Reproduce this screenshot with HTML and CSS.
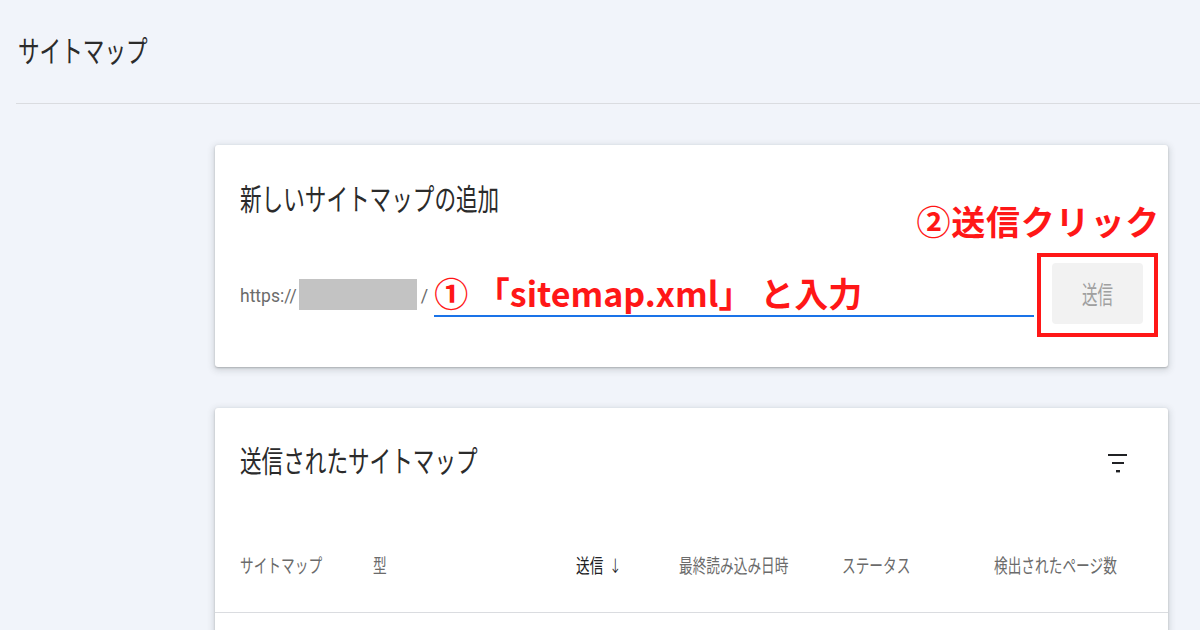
FILE: index.html
```html
<!DOCTYPE html>
<html lang="ja">
<head>
    <meta charset="UTF-8">
    <meta name="viewport" content="width=device-width, initial-scale=1.0">
    <title>サイトマップ</title>
    <link rel="stylesheet" href="styles.css">
</head>
<body>
    <header class="topbar">
        <h1 class="page-title"><span class="sq">サイトマップ</span></h1>
    </header>

    <main class="content">
        <section class="card add-card">
            <h2 class="card-title"><span class="sq">新しいサイトマップの追加</span></h2>
            <div class="add-row">
                <span class="prefix">https://</span>
                <span class="masked"></span>
                <span class="slash">/</span>
                <div class="url-input">① 「sitemap.xml」 と入力</div>
                <div class="submit-wrap">
                    <button class="submit-btn"><span class="sq">送信</span></button>
                    <span class="mark-box"></span>
                </div>
            </div>
            <div class="note-click">②送信クリック</div>
        </section>

        <section class="card list-card">
            <div class="list-head">
                <h2 class="card-title"><span class="sq">送信されたサイトマップ</span></h2>
                <svg class="filter-icon" width="20" height="20" viewBox="0 0 20 20">
                    <rect x="0" y="1" width="19" height="2" fill="#202124"/>
                    <rect x="4" y="9" width="12" height="2" fill="#202124"/>
                    <rect x="8" y="17" width="4" height="2.4" fill="#202124"/>
                </svg>
            </div>
            <div class="table-head">
                <span class="sq">サイトマップ</span>
                <span class="sq">型</span>
                <span class="sq sorted">送信 <b class="arrow">↓</b></span>
                <span class="sq">最終読み込み日時</span>
                <span class="sq">ステータス</span>
                <span class="sq">検出されたページ数</span>
            </div>
            <div class="table-body"></div>
        </section>
    </main>
</body>
</html>
```

FILE: styles.css
```css
body {
    margin: 0;
    padding: 0;
    background-color: #f1f4fa;
    color: #202124;
    font-family: 'Roboto', 'Noto Sans CJK JP', sans-serif;
    overflow: hidden;
}

/* 横に詰めた文字 */
.sq {
    display: inline-block;
    transform: scaleX(0.72);
    transform-origin: 0 50%;
    white-space: nowrap;
}

.topbar {
    height: 103px;
    margin-left: 16px;
    border-bottom: 1px solid #dadce0;
    display: flex;
    align-items: center;
}

.page-title {
    margin: 0 0 0 2px;
    font-size: 30px;
    font-weight: 400;
    color: #2b2b2b;
    line-height: 1;
}

.content {
    padding: 41px 32px 0 215px;
    display: flex;
    flex-direction: column;
    gap: 41px;
}

.card {
    background: #fff;
    border-radius: 3px;
    box-shadow: 0 1px 2px rgba(60, 64, 67, 0.3), 0 2px 6px 2px rgba(60, 64, 67, 0.15);
    position: relative;
}

.card-title {
    margin: 0;
    font-size: 30px;
    font-weight: 400;
    line-height: 1;
    color: #2b2b2b;
}

.add-card {
    height: 222px;
    padding: 40px 25px 0 25px;
    box-sizing: border-box;
}

.add-row {
    display: flex;
    align-items: center;
    margin-top: 47px;
    height: 62px;
}

.prefix {
    font-size: 17.5px;
    color: #6b6b6b;
    margin-top: 5px;
}

.masked {
    width: 118px;
    height: 31px;
    background: #c3c3c3;
    margin-left: 2px;
    margin-top: 2px;
}

.slash {
    font-size: 18px;
    color: #6b6b6b;
    margin: 4px 6px 0 4px;
}

.url-input {
    flex: 1;
    align-self: flex-start;
    height: 55px;
    box-sizing: border-box;
    border-bottom: 2px solid #1a73e8;
    font-family: 'Noto Sans CJK JP', sans-serif;
    font-size: 34px;
    font-weight: 700;
    color: #ff1717;
    line-height: 40px;
    padding-top: 11px;
    white-space: nowrap;
    overflow: hidden;
}

.submit-wrap {
    position: relative;
    margin-left: 18px;
}

.submit-btn {
    display: block;
    width: 91px;
    height: 61px;
    border: none;
    border-radius: 4px;
    background: #f2f2f2;
    color: #a0a0a0;
    font-family: 'Noto Sans CJK JP', sans-serif;
    font-size: 25px;
    padding: 0 0 0 30px;
    text-align: left;
}

.submit-btn .sq {
    transform: scaleX(0.62);
}

.mark-box {
    position: absolute;
    left: -15px;
    top: -10px;
    width: 121px;
    height: 84px;
    box-sizing: border-box;
    border: 4px solid #ff1717;
}

.note-click {
    position: absolute;
    right: 8px;
    top: 56px;
    font-family: 'Noto Sans CJK JP', sans-serif;
    font-size: 34px;
    font-weight: 700;
    color: #ff1717;
    line-height: 40px;
    letter-spacing: 0.8px;
}

.list-card {
    height: 240px;
}

.list-head {
    display: flex;
    align-items: center;
    justify-content: space-between;
    padding: 39px 40px 0 25px;
}

.filter-icon {
    margin-top: 2px;
}

.table-head {
    display: grid;
    grid-template-columns: 133px 203px 103px 163px 152px 1fr;
    align-items: center;
    height: 96px;
    margin-top: 39px;
    padding-left: 25px;
    border-bottom: 1px solid #dadce0;
    font-family: 'Noto Sans CJK JP', sans-serif;
    font-size: 19px;
    color: #6b6b6b;
}

.table-head .sorted {
    color: #202124;
}

.arrow {
    font-family: 'DejaVu Sans', sans-serif;
    font-weight: 300;
    font-size: 20px;
    margin-left: 4px;
}
```
